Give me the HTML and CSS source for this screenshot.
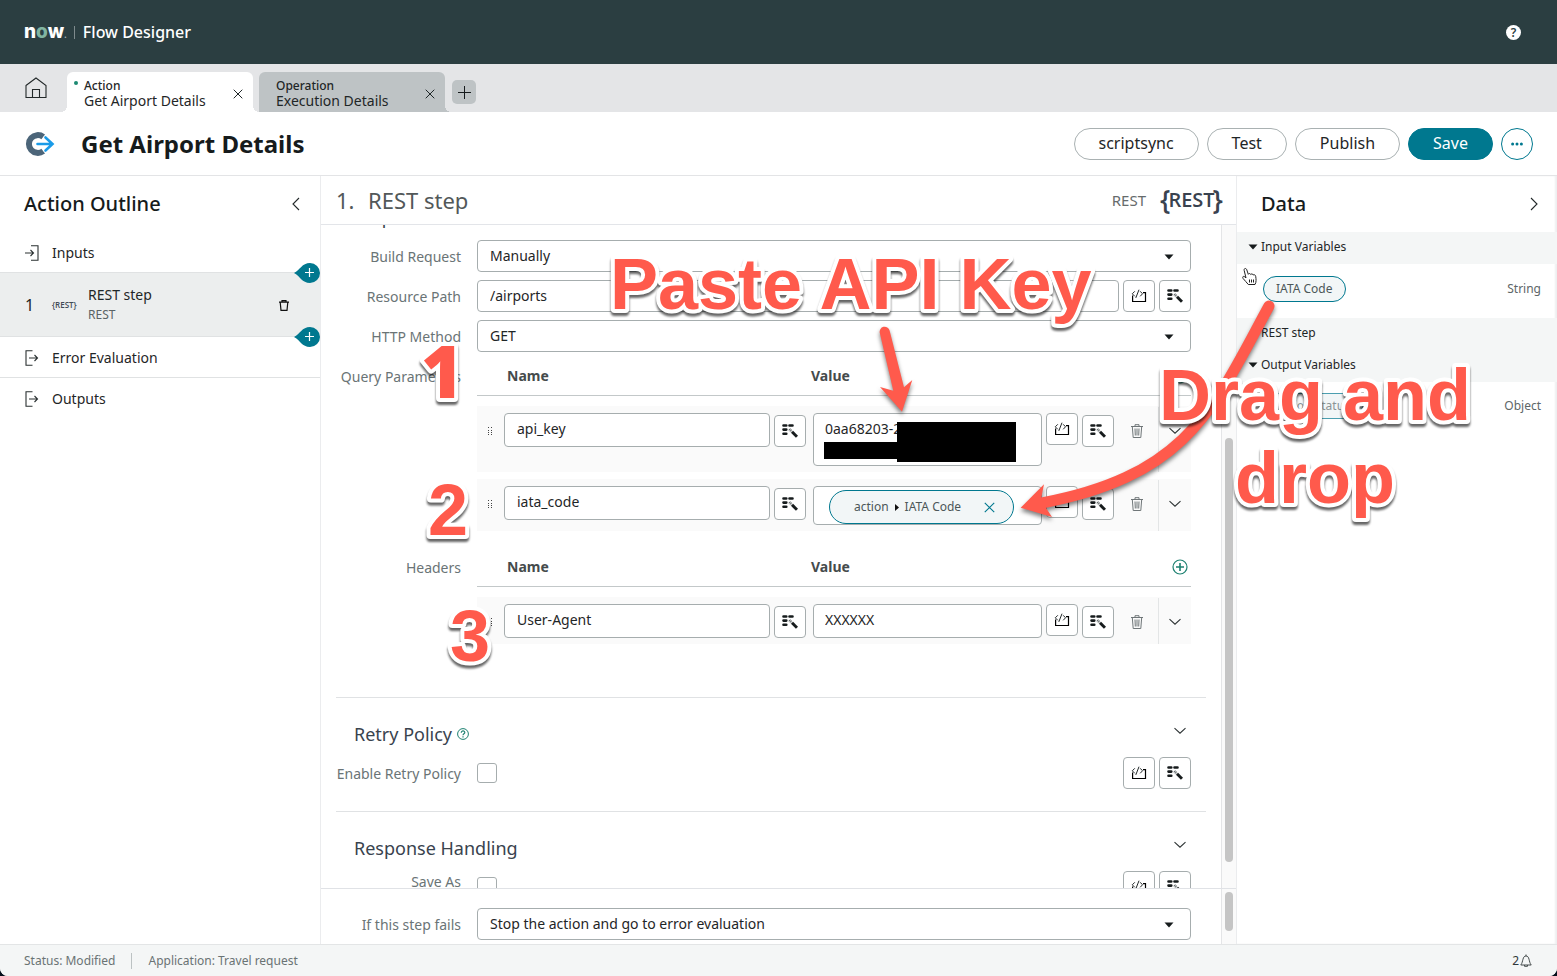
FILE: index.html
```html
<!DOCTYPE html>
<html lang="en">
<head>
<meta charset="utf-8">
<title>Flow Designer</title>
<link rel="stylesheet" href="styles.css">
</head>
<body>
<svg class="defs" aria-hidden="true">
  <symbol id="i-wand" viewBox="0 0 16 16">
    <path d="M1.500 2.500h2.800M7.500 2.500h3M1.500 6.600h2.800M1.500 10.700h2.800" stroke="#161b1c" stroke-width="2.600" stroke-linecap="round"/>
    <path d="M10 8.800l5 5" stroke="#161b1c" stroke-width="3"/>
    <path d="M7.300 6.100l2.400 2.400" stroke="#5a6162" stroke-width="2.600" stroke-dasharray="1 .6"/>
  </symbol>
  <symbol id="i-code" viewBox="0 0 16 16">
    <path d="M1.600 7.500v6h12.900V4.700h-2.500" fill="none" stroke="#000" stroke-width="1.200"/>
    <path d="M3.800 3.300L1.300 5.800l2.500 2.500M9.200 3.300l2.300 2.500-2.300 2.500M8 1.700L4.800 9.900" fill="none" stroke="#222829" stroke-width="1"/>
  </symbol>
  <symbol id="i-trash" viewBox="0 0 12 14">
    <path d="M0 2.500h12M4 2.500V.7h4v1.800M1.300 2.500l.9 11h7.600l.9-11M4 4.500l.3 7M6 4.500v7M8 4.500l-.3 7" fill="none" stroke="#6f7678" stroke-width="1"/>
  </symbol>
  <symbol id="i-down" viewBox="0 0 12 8">
    <path d="M.5 1.200l5.500 5 5.500-5" fill="none" stroke="#2c3233" stroke-width="1.100"/>
  </symbol>
  <symbol id="i-caret" viewBox="0 0 10 6"><path d="M.5.500h9L5 5.500z" fill="#161b1c"/></symbol>
  <symbol id="i-x" viewBox="0 0 10 10"><path d="M.7.700l8.600 8.600M9.300.700L.7 9.300" stroke="currentColor" stroke-width="1"/></symbol>
  <symbol id="i-grip" viewBox="0 0 6 10">
    <path d="M1.500 1v1M1.500 4v1M1.500 6v1M1.500 8v1M4.500 1v1M4.500 4v1M4.500 6v1M4.500 8v1" stroke="#444" stroke-width="1"/>
  </symbol>
  <symbol id="i-add" viewBox="0 0 26 20">
    <path d="M0 10C6 7 8 0 16 0a10 10 0 0 1 0 20C8 20 6 13 0 10z" fill="#00788f"/>
    <path d="M15.500 5v9M11 9.500h9" stroke="#fff" stroke-width="1.200"/>
  </symbol>
  <symbol id="i-out" viewBox="0 0 14 16">
    <path d="M7.500.700H1v14.600h6.500M4 8h8.500M9.500 5l3 3-3 3" fill="none" stroke="#2a3031" stroke-width="1.100"/>
  </symbol>
  <symbol id="i-in" viewBox="0 0 14 16">
    <path d="M6 .700h7v14.600H6M0 8h8.500M5.500 5l3 3-3 3" fill="none" stroke="#2a3031" stroke-width="1.100"/>
  </symbol>
</svg>

<div class="app">
  <header class="topbar">
    <span class="logo">n<span class="logo-o">o</span>w<span class="logo-dot">.</span></span>
    <span class="topbar-sep"></span>
    <span class="product">Flow Designer</span>
    <button class="help" aria-label="Help">?</button>
  </header>

  <nav class="tabs">
    <a class="home" href="#" aria-label="Home">
      <svg width="22" height="22" viewBox="0 0 22 22"><path d="M1 8.500L11 1l10 7.500v12H1zM7.500 20.500v-8h7v8" fill="none" stroke="#222829" stroke-width="1.100"/></svg>
    </a>
    <div class="tab tab-active">
      <span class="dot"></span>
      <div class="tab-text"><span class="tab-kind">Action</span><span class="tab-name">Get Airport Details</span></div>
      <button class="tab-close" aria-label="Close tab"><svg width="10" height="10"><use href="#i-x"/></svg></button>
    </div>
    <div class="tab tab-idle">
      <div class="tab-text"><span class="tab-kind">Operation</span><span class="tab-name">Execution Details</span></div>
      <button class="tab-close" aria-label="Close tab"><svg width="10" height="10"><use href="#i-x"/></svg></button>
    </div>
    <button class="tab-new" aria-label="New tab"><svg width="14" height="14" viewBox="0 0 14 14"><path d="M7.500 1v13M1 7.500h13" stroke="#161b1c" stroke-width="1"/></svg></button>
  </nav>

  <div class="titlebar">
    <svg class="title-icon" width="30" height="24" viewBox="0 0 30 24">
      <path d="M18.200 4.900A8.900 8.900 0 1 0 18.200 19.100" fill="none" stroke="#4c6579" stroke-width="6"/>
      <path d="M12.500 12H27M20 6l6.500 6-6.500 6" fill="none" stroke="#fff" stroke-width="3.800" stroke-linecap="round"/>
      <path d="M12.500 12H27M20.500 5.500l7 6.500-7 6.500" fill="none" stroke="#1a9be8" stroke-width="2.600" stroke-linecap="round"/>
    </svg>
    <h1>Get Airport Details</h1>
    <div class="actions">
      <button class="btn">scriptsync</button>
      <button class="btn">Test</button>
      <button class="btn">Publish</button>
      <button class="btn btn-primary">Save</button>
      <button class="btn-more" aria-label="More"><svg width="12" height="4" viewBox="0 0 12 4"><g fill="#00788f"><circle cx="1.600" cy="2" r="1.500"/><circle cx="6" cy="2" r="1.500"/><circle cx="10.400" cy="2" r="1.500"/></g></svg></button>
    </div>
  </div>

  <main class="main">
    <aside class="outline">
      <div class="panel-head">
        <h2>Action Outline</h2>
        <button class="bare" aria-label="Collapse"><svg width="8" height="14" viewBox="0 0 8 14"><path d="M7 1L1 7l6 6" fill="none" stroke="#222829" stroke-width="1.100"/></svg></button>
      </div>
      <div class="o-row"><svg width="14" height="16"><use href="#i-in"/></svg><span>Inputs</span></div>
      <div class="o-row o-step">
        <button class="add add-top" aria-label="Add step"><svg width="26" height="20"><use href="#i-add"/></svg></button>
        <span class="o-num">1</span>
        <span class="mini-rest">{REST}</span>
        <span class="o-name">REST step<small>REST</small></span>
        <button class="bare o-del" aria-label="Delete step"><svg width="10" height="11" viewBox="0 0 10 11"><path d="M0 2.200h10M3 2V.600h4V2M1.200 2.200l.8 8.200h6l.8-8.200" fill="none" stroke="#111" stroke-width="1.200"/></svg></button>
        <button class="add add-bottom" aria-label="Add step"><svg width="26" height="20"><use href="#i-add"/></svg></button>
      </div>
      <div class="o-row o-line"><svg width="14" height="16"><use href="#i-out"/></svg><span>Error Evaluation</span></div>
      <div class="o-row"><svg width="14" height="16"><use href="#i-out"/></svg><span>Outputs</span></div>
    </aside>

    <section class="step">
      <div class="step-head">
        <h2><span>1.</span>REST step</h2>
        <span class="step-type">REST</span>
        <span class="rest-logo"><span class="brace">{</span>REST<span class="brace">}</span></span>
      </div>

      <div class="scroll">
        <form class="content">
          <h3 class="first-title">Request Details</h3>
          <div class="fields">
            <div class="field">
              <label for="build">Build Request</label>
              <div class="select"><select id="build"><option>Manually</option></select><svg width="10" height="6"><use href="#i-caret"/></svg></div>
            </div>
            <div class="field">
              <label for="path">Resource Path</label>
              <div class="with-tools">
                <input class="text" id="path" type="text" value="/airports">
                <button type="button" class="tool" aria-label="Script"><svg width="16" height="16"><use href="#i-code"/></svg></button>
                <button type="button" class="tool" aria-label="Pick data"><svg width="16" height="16"><use href="#i-wand"/></svg></button>
              </div>
            </div>
            <div class="field">
              <label for="method">HTTP Method</label>
              <div class="select"><select id="method"><option>GET</option></select><svg width="10" height="6"><use href="#i-caret"/></svg></div>
            </div>
            <div class="field">
              <span class="label">Query Parameters</span>
              <div class="params">
                <div class="p-head"><b>Name</b><b>Value</b><button type="button" class="bare" aria-label="Add parameter"><svg width="16" height="16" viewBox="0 0 16 16"><path d="M8 4v8M4 8h8" stroke="#1c8070" stroke-width="1.600"/><circle cx="8" cy="8" r="7" fill="none" stroke="#1c8070" stroke-width="1.200"/></svg></button></div>
                <div class="p-row">
                  <svg class="grip" width="6" height="10"><use href="#i-grip"/></svg>
                  <input class="text" type="text" value="api_key" aria-label="Name">
                  <button type="button" class="tool low near" aria-label="Pick data"><svg width="16" height="16"><use href="#i-wand"/></svg></button>
                  <div class="value"><textarea class="text tall" aria-label="Value">0aa68203-2</textarea><span class="mask mask-a"></span><span class="mask mask-b"></span></div>
                  <button type="button" class="tool near" aria-label="Script"><svg width="16" height="16"><use href="#i-code"/></svg></button>
                  <button type="button" class="tool low near" aria-label="Pick data"><svg width="16" height="16"><use href="#i-wand"/></svg></button>
                  <button type="button" class="bare p-del" aria-label="Delete"><svg width="12" height="14"><use href="#i-trash"/></svg></button>
                  <button type="button" class="bare p-more" aria-label="Expand"><svg width="12" height="8"><use href="#i-down"/></svg></button>
                </div>
                <div class="p-row">
                  <svg class="grip" width="6" height="10"><use href="#i-grip"/></svg>
                  <input class="text" type="text" value="iata_code" aria-label="Name">
                  <button type="button" class="tool low near" aria-label="Pick data"><svg width="16" height="16"><use href="#i-wand"/></svg></button>
                  <div class="value value-pill">
                    <span class="pill pill-big">action<svg width="4" height="7" viewBox="0 0 4 7"><path d="M0 0l4 3.500L0 7z" fill="#111"/></svg>IATA Code<button type="button" class="bare pill-x" aria-label="Remove"><svg width="11" height="11" viewBox="0 0 10 10"><use href="#i-x"/></svg></button></span>
                  </div>
                  <button type="button" class="tool near" aria-label="Script"><svg width="16" height="16"><use href="#i-code"/></svg></button>
                  <button type="button" class="tool low near" aria-label="Pick data"><svg width="16" height="16"><use href="#i-wand"/></svg></button>
                  <button type="button" class="bare p-del" aria-label="Delete"><svg width="12" height="14"><use href="#i-trash"/></svg></button>
                  <button type="button" class="bare p-more" aria-label="Expand"><svg width="12" height="8"><use href="#i-down"/></svg></button>
                </div>
              </div>
            </div>
            <div class="field field-headers">
              <span class="label">Headers</span>
              <div class="params">
                <div class="p-head"><b>Name</b><b>Value</b><button type="button" class="bare" aria-label="Add header"><svg width="16" height="16" viewBox="0 0 16 16"><path d="M8 4v8M4 8h8" stroke="#1c8070" stroke-width="1.600"/><circle cx="8" cy="8" r="7" fill="none" stroke="#1c8070" stroke-width="1.200"/></svg></button></div>
                <div class="p-row">
                  <svg class="grip" width="6" height="10"><use href="#i-grip"/></svg>
                  <input class="text" type="text" value="User-Agent" aria-label="Name">
                  <button type="button" class="tool low near" aria-label="Pick data"><svg width="16" height="16"><use href="#i-wand"/></svg></button>
                  <input class="text text-value" type="text" value="XXXXXX" aria-label="Value">
                  <button type="button" class="tool near" aria-label="Script"><svg width="16" height="16"><use href="#i-code"/></svg></button>
                  <button type="button" class="tool low near" aria-label="Pick data"><svg width="16" height="16"><use href="#i-wand"/></svg></button>
                  <button type="button" class="bare p-del" aria-label="Delete"><svg width="12" height="14"><use href="#i-trash"/></svg></button>
                  <button type="button" class="bare p-more" aria-label="Expand"><svg width="12" height="8"><use href="#i-down"/></svg></button>
                </div>
              </div>
            </div>
          </div>

          <div class="group">
            <div class="group-head">
              <h3>Retry Policy</h3>
              <svg width="12" height="12" viewBox="0 0 12 12"><circle cx="6" cy="6" r="5.400" fill="none" stroke="#1c8070"/><path d="M4.300 4.700c0-2.400 3.600-2.200 3.500-.1C7.700 5.900 6 5.700 6 7.200M6 8.200v1.200" fill="none" stroke="#1c8070" stroke-width="1.200"/></svg>
              <button type="button" class="bare" aria-label="Collapse section"><svg width="12" height="8"><use href="#i-down"/></svg></button>
            </div>
            <div class="field">
              <label for="retry">Enable Retry Policy</label>
              <div class="with-tools">
                <input class="check" id="retry" type="checkbox">
                <button type="button" class="tool" aria-label="Script"><svg width="16" height="16"><use href="#i-code"/></svg></button>
                <button type="button" class="tool" aria-label="Pick data"><svg width="16" height="16"><use href="#i-wand"/></svg></button>
              </div>
            </div>
          </div>
          <div class="group">
            <div class="group-head">
              <h3>Response Handling</h3>
              <button type="button" class="bare" aria-label="Collapse section"><svg width="12" height="8"><use href="#i-down"/></svg></button>
            </div>
            <div class="field">
              <label class="label-top" for="saveas">Save As</label>
              <div class="with-tools">
                <input class="check" id="saveas" type="checkbox">
                <button type="button" class="tool" aria-label="Script"><svg width="16" height="16"><use href="#i-code"/></svg></button>
                <button type="button" class="tool" aria-label="Pick data"><svg width="16" height="16"><use href="#i-wand"/></svg></button>
              </div>
            </div>
          </div>
        </form>
        <div class="track"><div class="thumb thumb-main"></div></div>
      </div>

      <div class="step-foot">
        <div class="foot-content">
          <div class="field">
            <label for="fails">If this step fails</label>
            <div class="select"><select id="fails"><option>Stop the action and go to error evaluation</option></select><svg width="10" height="6"><use href="#i-caret"/></svg></div>
          </div>
        </div>
        <div class="track"><div class="thumb thumb-foot"></div></div>
      </div>
    </section>

    <aside class="data">
      <div class="panel-head">
        <h2>Data</h2>
        <button class="bare" aria-label="Collapse"><svg width="8" height="14" viewBox="0 0 8 14"><path d="M1 1l6 6-6 6" fill="none" stroke="#222829" stroke-width="1.100"/></svg></button>
      </div>
      <div class="d-head"><svg width="10" height="6"><use href="#i-caret"/></svg>Input Variables</div>
      <div class="d-row d-first"><span class="pill">IATA Code</span><span>String</span></div>
      <div class="d-head d-plain">REST step</div>
      <div class="d-head"><svg width="10" height="6"><use href="#i-caret"/></svg>Output Variables</div>
      <div class="d-row"><span class="pill pill-dim">Action Status</span><span>Object</span></div>
    </aside>
  </main>

  <footer class="status">
    <span>Status: Modified</span>
    <span class="status-sep"></span>
    <span>Application: Travel request</span>
    <span class="alerts">2<svg width="12" height="13" viewBox="0 0 12 13"><path d="M.8 11C2.300 9 2.300 7.500 3 5.200 3.500 3.200 4.300 2 6 2s2.500 1.200 3 3.200c.7 2.300.7 3.800 2.200 5.800zM4.500 11v1.300h3V11M6 2V.500" fill="none" stroke="#444b4c" stroke-width="1"/></svg></span>
  </footer>

  <svg class="notes" width="1557" height="976" viewBox="0 0 1557 976">
    <path class="hand" d="M1246 278l-1.800-7.500c-.5-2.300 1.900-2.700 2.500-.9l1.600 4.700c.5-1.200 2.100-.9 2.400.2.700-1 2.200-.6 2.400.5 1.100-.7 2.400 0 2.600 1.300.4 2.900.8 5.500-.7 8.200h-6.700c-1.400-2.300-3.600-3.600-5.200-6-1.300-2.200.9-3.100 2.900-.5zM1249.500 279.500v3M1251.500 279.500v3M1253.500 279.500v3"/>
    <g class="arrows">
      <path d="M880 387L893.300 390.700 879.800 333A5 5 0 0 1 889.600 330.500L904 387.300 912.300 380 902 411.700z"/>
      <path class="curve" d="M1269 306C1215 405 1190 475 1042 503"/>
      <path d="M1020.700 507.700L1044 484.300 1041 499 1046 508 1052 517z"/>
    </g>
    <g class="callouts">
      <text x="610" y="309">Paste API Key</text>
      <text x="1315" y="420" text-anchor="middle">Drag and</text>
      <text x="1315" y="503" text-anchor="middle">drop</text>
      <text class="one" x="421" y="398">1</text>
      <text x="428" y="535">2</text>
      <text x="450" y="661">3</text>
    </g>
  </svg>
</div>
</body>
</html>
```
FILE: styles.css
```css
* { box-sizing: border-box; }
body { margin: 0; background: #06101c; color: #1f2627; font: 14px/20px "Noto Sans", "Open Sans", sans-serif; }
h1, h2, h3 { margin: 0; }
button, input, select, textarea { font: inherit; color: inherit; margin: 0; }
button { cursor: pointer; }
svg { display: block; flex: none; }
.defs { position: absolute; width: 0; height: 0; }
.bare { padding: 0; border: 0; background: none; display: flex; align-items: center; justify-content: center; }

.app { position: relative; display: flex; flex-direction: column; height: 100vh; background: #fff; overflow: hidden; border-radius: 0 0 8px 8px; }

/* Top bar */
.topbar { display: flex; align-items: center; flex: none; height: 64px; padding: 0 36px 0 24px; background: #2b3e41; color: #fff; }
.logo { padding-top: 2px; font: 800 19px/24px Inter, sans-serif; }
.logo-o { color: #81b5a1; }
.logo-dot { font-size: 8px; color: #aab5b6; }
.topbar-sep { width: 1px; height: 13px; margin: 1px 8px 0 7px; background: #7f8b8d; }
.product { font-size: 16px; font-weight: 500; }
.help { margin-left: auto; width: 15px; height: 15px; padding: 0; border: 0; border-radius: 50%; background: #fff; color: #2b3e41; font-size: 12px; line-height: 15px; font-weight: 600; }

/* Tabs */
.tabs { display: flex; align-items: flex-end; flex: none; height: 48px; background: #e4e5e7; }
.home { display: flex; align-items: center; width: 67px; height: 48px; padding-left: 25px; }
.tab { position: relative; display: flex; align-items: center; width: 186px; height: 40px; margin-right: 6px; padding: 0 10px 0 17px; border-radius: 6px 6px 0 0; }
.tab-active { background: #fff; }
.tab-idle { background: #bec3c5; }
.tab::before, .tab::after { content: ""; position: absolute; bottom: 0; width: 6px; height: 6px; }
.tab::before { left: -6px; }
.tab::after { right: -6px; }
.tab-active::before { background: radial-gradient(circle at 0 0, transparent 6px, #fff 6px); }
.tab-active::after { background: radial-gradient(circle at 100% 0, transparent 6px, #fff 6px); }
.tab-idle::after { background: radial-gradient(circle at 100% 0, transparent 6px, #bec3c5 6px); }
.tab-text { display: flex; flex-direction: column; flex: 1; padding-top: 4px; }
.tab-kind { font-size: 12px; line-height: 14px; font-weight: 500; }
.tab-name { font-size: 14px; line-height: 16px; }
.tab-close { padding: 4px 0 0; border: 0; background: none; }
.dot { position: absolute; left: 7px; top: 9px; width: 4px; height: 4px; border-radius: 50%; background: #1c8a72; }
.tab-new { display: flex; align-items: center; justify-content: center; width: 24px; height: 24px; margin: 0 0 8px 1px; padding: 0; border: 0; border-radius: 5px; background: #bec3c5; }

/* Title bar */
.titlebar { display: flex; align-items: center; flex: none; height: 64px; padding: 0 24px; border-bottom: 1px solid #e3e4e6; }
.title-icon { margin-left: 1px; }
h1 { margin-left: 26px; font-size: 24px; line-height: 32px; font-weight: 700; color: #161b1c; }
.actions { display: flex; gap: 8px; margin-left: auto; }
.btn { height: 32px; padding: 0 24px 2px; border: 1px solid #a9b1b2; border-radius: 16px; background: #fff; font-size: 16px; line-height: 24px; }
.btn-primary { background: #00788f; border-color: #00788f; color: #fff; }
.btn-more { display: flex; align-items: center; justify-content: center; width: 32px; height: 32px; padding: 0; border: 1px solid #00788f; border-radius: 50%; background: #fff; }

.main { display: flex; flex: 1; min-height: 0; }
.panel-head { display: flex; align-items: center; justify-content: space-between; height: 56px; }
.panel-head h2 { font-size: 20px; line-height: 28px; font-weight: 500; color: #161b1c; }

/* Action outline */
.outline { flex: none; width: 321px; border-right: 1px solid #ebecee; }
.outline .panel-head { padding: 0 20px 0 24px; }
.o-row { display: flex; align-items: center; height: 41px; padding: 1px 24px 0 25px; }
.o-row > svg { margin-right: 13px; }
.o-line { padding-top: 2px; border-bottom: 1px solid #e0e2e3; }
.o-step { position: relative; height: 65px; margin-top: -1px; padding: 1px 31px 0 25px; background: #eceeee; border-top: 1px solid #e0e2e3; border-bottom: 1px solid #e0e2e3; }
.o-num { width: 27px; font-size: 16px; }
.mini-rest { width: 36px; font: 600 8px/12px "Open Sans", sans-serif; color: #414a55; }
.o-name { display: flex; flex-direction: column; flex: 1; }
.o-name small { font-size: 12px; color: #5a6365; }
.o-del { margin-right: 0; }
.add { position: absolute; right: 0; padding: 0; border: 0; background: none; }
.add-top { top: -10px; }
.add-bottom { bottom: -11px; }

/* Step form */
.step { display: flex; flex-direction: column; flex: 1; min-width: 0; }
.step-head { display: flex; align-items: center; flex: none; height: 49px; padding: 0 15px; border-bottom: 1px solid #e3e5e9; }
.step-head h2 { flex: 1; font-size: 22px; line-height: 30px; font-weight: 400; color: #525859; }
.step-head h2 span { display: inline-block; width: 32px; }
.step-type { margin-right: 16px; font-size: 15px; color: #666b6c; }
.rest-logo { display: flex; align-items: center; font: 600 20px/28px "Open Sans", sans-serif; color: #39424f; }
.brace { margin: 0 -2px; font-size: 27px; padding-bottom: 2px; }
.scroll { display: flex; flex: 1; min-height: 0; }
.content { flex: 1; min-width: 0; padding: 0 15px; overflow: hidden; }
h3 { font-size: 18px; line-height: 24px; font-weight: 400; color: #39434e; }
.first-title { margin: -20px 18px 11px; }
.fields { display: flex; flex-direction: column; gap: 8px; padding-bottom: 53px; }
.field { display: grid; grid-template-columns: 125px minmax(0, 1fr); gap: 16px; padding-right: 15px; }
.field-headers { margin-top: 12px; }
.field > label, .label { padding-top: 1px; line-height: 32px; text-align: right; color: #6a7476; white-space: nowrap; height: 32px; }
.field > .label-top { padding: 0; line-height: 21px; }
.select { position: relative; }
.select select { display: block; width: 100%; height: 32px; padding: 0 32px 0 12px; border: 1px solid #a6adae; border-radius: 4px; background: #fff; appearance: none; }
.select svg { position: absolute; right: 17px; top: 14px; pointer-events: none; }
.text { display: block; width: 100%; min-width: 0; height: 34px; padding: 0 12px 4px; border: 1px solid #a6adae; border-radius: 4px; background: #fff; resize: none; overflow: hidden; }
.text-value { padding-left: 11px; }
.tall { height: 53px; padding: 5px 11px; }
.with-tools { display: flex; align-items: center; gap: 4px; }
.with-tools .text { flex: 1; height: 32px; padding-bottom: 2px; }
.with-tools .check { margin-right: auto; }
.tool { display: flex; align-items: center; justify-content: center; flex: none; width: 32px; height: 32px; padding: 0; border: 1px solid #a6adae; border-radius: 4px; background: #fff; }
.near { margin-left: 4px; }
.low { margin-top: 2px; }
.with-tools .tool { margin: 0; }
.check { appearance: none; width: 20px; height: 20px; border: 1px solid #a6adae; border-radius: 3px; background: #fff; }

.params { display: flex; flex-direction: column; gap: 7px; }
.p-head { display: grid; grid-template-columns: minmax(0, 304fr) minmax(0, 361fr) 16px; align-items: center; height: 36px; margin-bottom: 3px; padding: 0 3px 4px 30px; border-bottom: 1px solid #c3c8c9; color: #454b4c; }
.p-head b { font-weight: 700; }
.p-row { display: grid; grid-template-columns: 27px minmax(0, 266fr) 43px minmax(0, 229fr) 36px 36px 44px 33px; align-items: start; padding: 7px 0 6px; background: #fafafa; }
.grip { margin: 13px 0 0 10px; }
.value { position: relative; }
.mask { position: absolute; background: #000; }
.mask-a { left: 11px; top: 29px; width: 80px; height: 17px; }
.mask-b { left: 84px; top: 9px; width: 119px; height: 40px; }
.value-pill { height: 39px; padding: 3px 0 0 15px; border: 1px solid #a6adae; border-radius: 4px; background: #fff; }
.p-del { width: 100%; height: 34px; padding: 2px 0 0 2px; }
.p-row .p-more { align-self: stretch; height: auto; margin: -6px 0 -6px; padding: 13px 0 0; align-items: flex-start; border-left: 1px solid #e3e5e6; }
.p-more svg { margin-top: 7px; }

.pill { display: inline-flex; align-items: center; height: 26px; padding: 0 12px; border: 1px solid #00788f; border-radius: 17px; background: #f2f6f7; color: #4c5759; font-size: 12px; line-height: 16px; }
.pill-big { height: 34px; padding: 0 18px 0 24px; gap: 6px; white-space: nowrap; }
.pill-x { margin-left: 17px; color: #00788f; }
.pill-dim { color: #8b9496; border-color: #4c9fb0; }

.group { padding: 24px 0 22px; border-top: 1px solid #e0e2e4; }
.group-head { display: flex; align-items: center; gap: 5px; margin-bottom: 11px; padding: 0 20px 0 18px; }
.group-head .bare { margin-left: auto; padding-bottom: 6px; }

.track { display: flex; flex-direction: column; flex: none; width: 15px; padding: 0 3px; background: #fafafa; border-left: 1px solid #e4e5e7; }
.thumb { border-radius: 4px; background: #c5c5c5; }
.thumb-main { height: 64%; margin-top: auto; margin-bottom: 26px; }
.thumb-foot { height: 39px; margin-top: 3px; }
.step-foot { display: flex; flex: none; height: 56px; border-top: 1px solid #e0e2e6; }
.foot-content { flex: 1; min-width: 0; padding: 19px 15px 0; }

/* Data panel */
.data { flex: none; width: 321px; border-left: 1px solid #ebecee; box-shadow: inset -2px 0 2px #eeeff0; }
.data .panel-head { padding: 0 19px 0 24px; }
.d-head { display: flex; align-items: center; gap: 3px; height: 32px; padding: 0 11px 3px; background: #f4f6f6; font-size: 12px; line-height: 16px; }
.d-plain { padding-left: 24px; }
.d-row { display: flex; align-items: center; justify-content: space-between; height: 48px; padding: 0 16px 0 26px; font-size: 12px; color: #5d6668; }
.d-first { height: 54px; padding-bottom: 5px; }

/* Status bar */
.status { display: flex; align-items: center; flex: none; height: 32px; padding: 0 25px 0 24px; border-top: 1px solid #e3e5e6; background: #f4f6f6; color: #6a7374; font-size: 12px; line-height: 16px; }
.status-sep { width: 1px; height: 16px; margin: 0 16px; background: #bcc2c3; }
.alerts { display: flex; align-items: center; gap: 1px; margin-left: auto; color: #30383a; }

/* Callouts over the page */
.notes { position: absolute; left: 0; top: 0; pointer-events: none; }
.hand { fill: #fff; stroke: #222; stroke-width: 1; }
.arrows { fill: #ff5a4c; filter: drop-shadow(0 3px 2px rgba(0, 0, 0, .5)); }
.curve { fill: none; stroke: #ff5a4c; stroke-width: 11px; stroke-linecap: round; }
.callouts { filter: drop-shadow(0 3px 1px rgba(0, 0, 0, .6)); }
.callouts text { font: 700 72px "Liberation Sans", Arial, sans-serif; fill: #ff5a4c; stroke: #fff; stroke-width: 8px; stroke-linejoin: round; paint-order: stroke; }
.callouts .one { font-family: "Open Sans", sans-serif; font-weight: 800; }
```
